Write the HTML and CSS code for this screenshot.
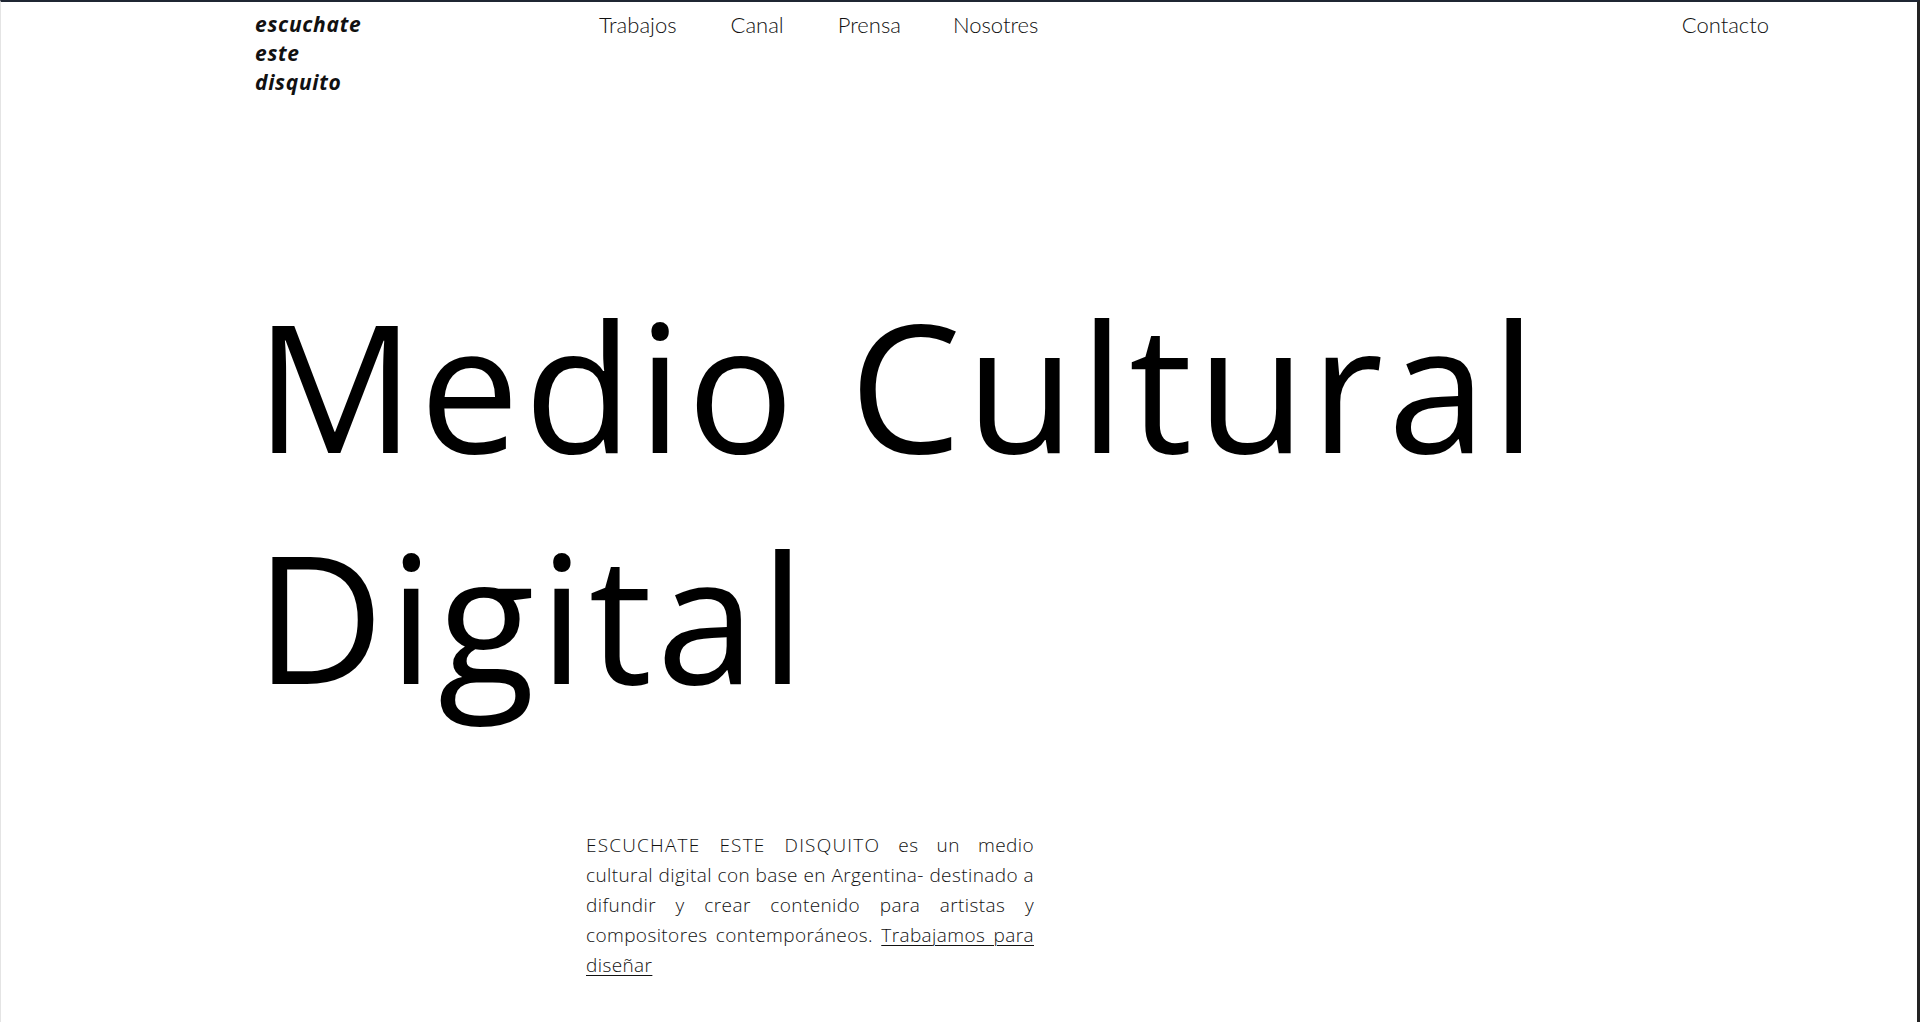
FILE: index.html
```html
<!DOCTYPE html>
<html lang="es">
<head>
<meta charset="utf-8">
<title>escuchate este disquito</title>
<link rel="stylesheet" href="styles.css">
</head>
<body>
<div class="frame">
  <header class="top">
    <a class="logo" href="#">escuchate<br>este<br>disquito</a>
    <nav class="menu">
      <a href="#">Trabajos</a>
      <a href="#">Canal</a>
      <a href="#">Prensa</a>
      <a href="#">Nosotres</a>
    </nav>
    <a class="contact" href="#">Contacto</a>
  </header>
  <main class="hero">
    <h1 class="title">Medio Cultural<br>Digital</h1>
    <p class="intro"><span class="caps">ESCUCHATE ESTE DISQUITO</span> es un medio cultural digital con base en Argentina- destinado a difundir y crear contenido para artistas y compositores contemporáneos. <a href="#">Trabajamos para diseñar</a></p>
  </main>
</div>
</body>
</html>
```

FILE: styles.css
```css
html, body {
  margin: 0;
  padding: 0;
  background: #ffffff;
}
.frame {
  box-sizing: border-box;
  height: 1022px;
  overflow: hidden;
  border-top: 2px solid #1f2633;
  border-right: 3px solid #232323;
  border-left: 1px solid #e4e4e4;
  background: #fff;
  color: #000;
}
.top {
  display: flex;
  align-items: flex-start;
  padding: 8px 148px 0 254px;
  font-family: "Lato", "Open Sans", sans-serif;
  font-size: 22px;
  line-height: 29px;
}
.top a {
  color: #111;
  text-decoration: none;
}
.logo {
  font-family: "Open Sans", sans-serif;
  font-weight: 700;
  font-style: italic;
  font-size: 21px;
  letter-spacing: 0.7px;
  width: 344px;
}
.menu {
  display: flex;
  gap: 54px;
  font-weight: 300;
}
.menu a:last-child {
  margin-left: -2px;
}
.contact {
  margin-left: auto;
  font-weight: 300;
}
.hero {
  padding-left: 254px;
}
.title {
  margin: 172px 0 0;
  font-family: "Open Sans", sans-serif;
  font-weight: 400;
  font-size: 178px;
  line-height: 231px;
  letter-spacing: 4.5px;
}
.intro {
  margin: 99px 0 0 331px;
  width: 448px;
  font-family: "Open Sans", sans-serif;
  font-weight: 300;
  font-size: 19px;
  line-height: 30px;
  letter-spacing: 0.4px;
  text-align: justify;
  color: #111;
}
.caps {
  letter-spacing: 1.2px;
}
.intro a {
  color: #111;
  text-decoration: underline;
  text-underline-offset: 3px;
  text-decoration-thickness: 1px;
}
```
